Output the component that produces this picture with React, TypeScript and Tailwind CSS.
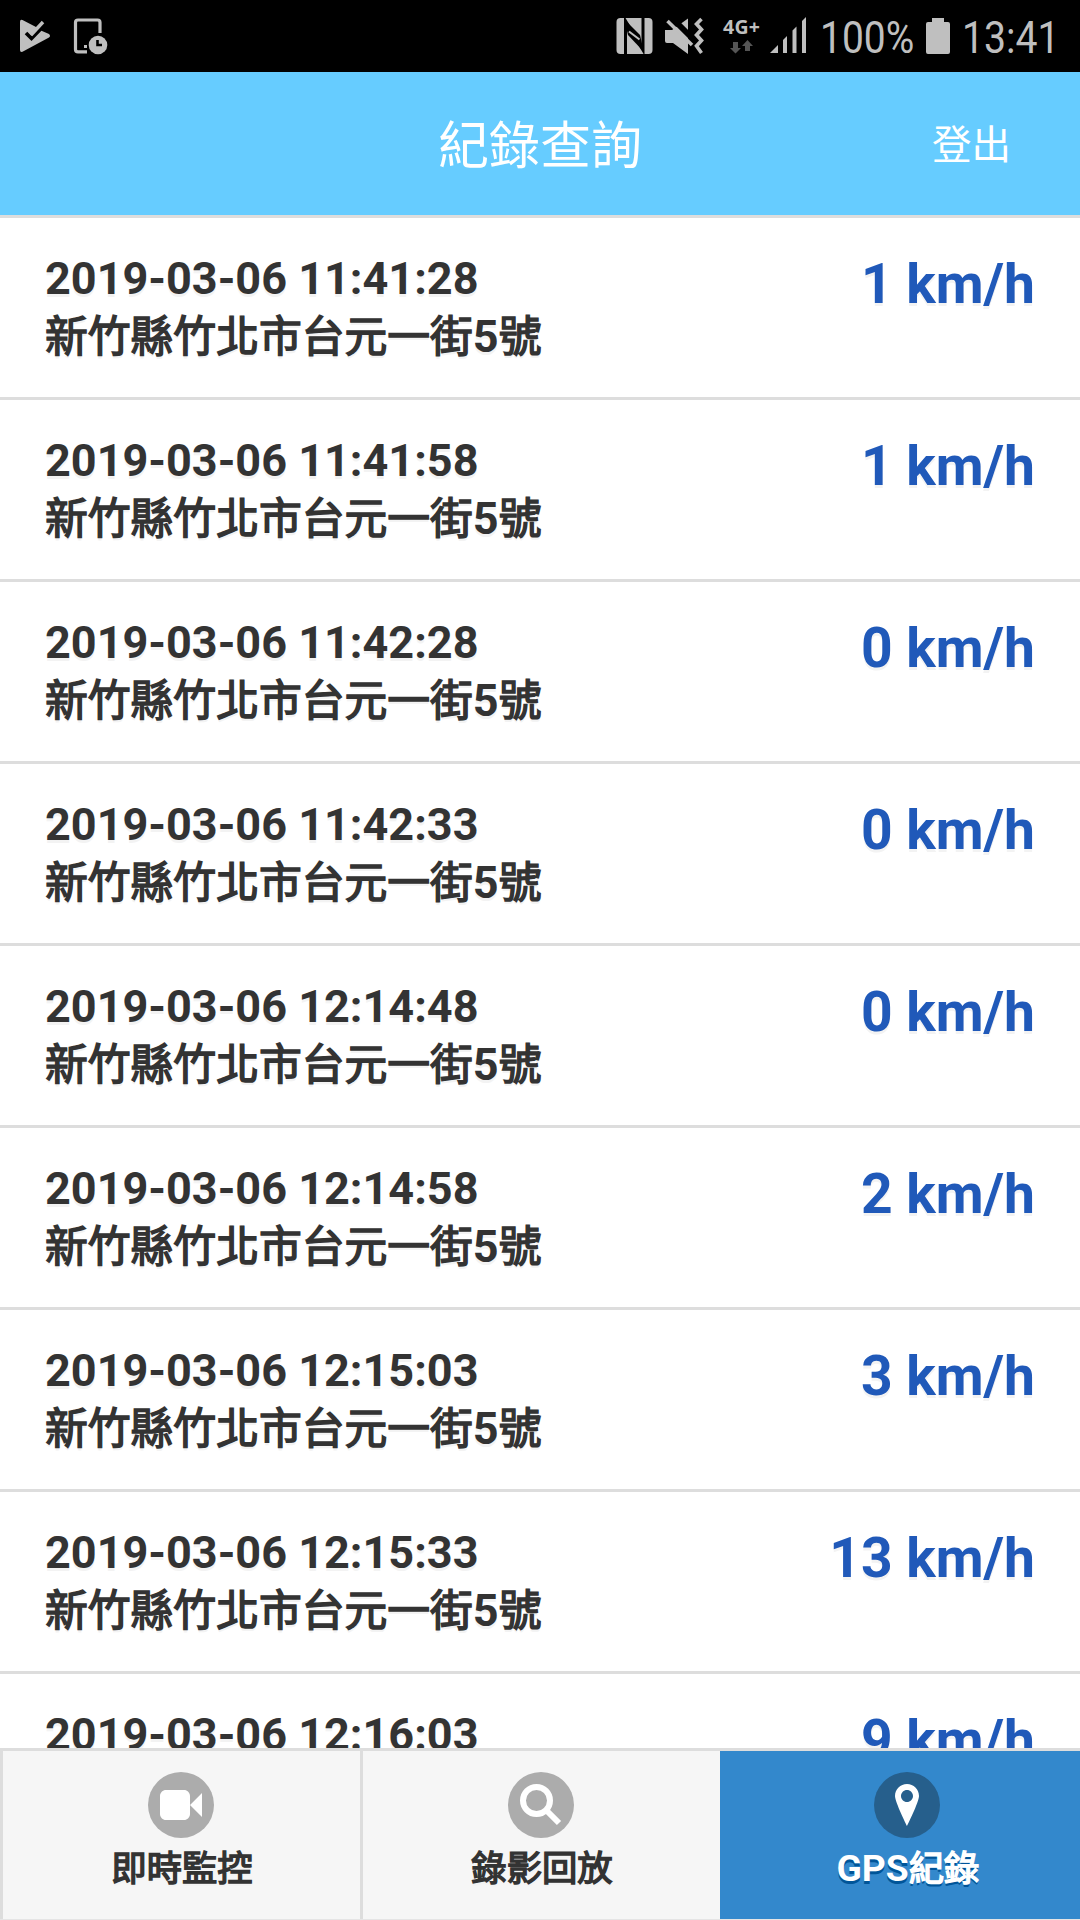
import type { ReactNode } from "react";

interface GpsRecord {
  time: string;
  address: string;
  speed: number;
}

const ADDRESS = "新竹縣竹北市台元一街5號";

const records: GpsRecord[] = [
  { time: "2019-03-06 11:41:28", address: ADDRESS, speed: 1 },
  { time: "2019-03-06 11:41:58", address: ADDRESS, speed: 1 },
  { time: "2019-03-06 11:42:28", address: ADDRESS, speed: 0 },
  { time: "2019-03-06 11:42:33", address: ADDRESS, speed: 0 },
  { time: "2019-03-06 12:14:48", address: ADDRESS, speed: 0 },
  { time: "2019-03-06 12:14:58", address: ADDRESS, speed: 2 },
  { time: "2019-03-06 12:15:03", address: ADDRESS, speed: 3 },
  { time: "2019-03-06 12:15:33", address: ADDRESS, speed: 13 },
  { time: "2019-03-06 12:16:03", address: ADDRESS, speed: 9 },
];

// Latin runs keep the parent's bold, Chinese runs are slightly smaller with a synthetic bold
function MixedText({ text }: { text: string }) {
  return (
    <>
      {text.split(/([A-Za-z0-9]+)/).filter(Boolean).map((part, index) =>
        /^[A-Za-z0-9]/.test(part) ? (
          <span key={index}>{part}</span>
        ) : (
          <span key={index} className="text-[0.951em] font-normal [-webkit-text-stroke:1.5px_currentColor]">
            {part}
          </span>
        )
      )}
    </>
  );
}

function StatusBar() {
  return (
    <div className="flex h-[72px] shrink-0 items-start bg-black text-[#bfbfbf]">
      <svg className="h-[72px] w-[600px] shrink-0" viewBox="0 0 600 72" fill="currentColor">
        <path d="M20 22Q20 19 22.500 20L36 27L42 31L49 34Q51 36 49 37.500L22.500 51.800Q20 52.500 20 50Z" />
        <path d="M26 33L31.500 38.500L44 25.500" fill="none" stroke="#000" strokeWidth="3.600" />
        <path d="M31 35L43 22" fill="none" stroke="currentColor" strokeWidth="3.400" />
        <path d="M87 51.800H78Q75.500 51.800 75.500 49.500V22.500Q75.500 20 78 20H97.500Q100 20 100 22.500V33" fill="none" stroke="currentColor" strokeWidth="3.200" />
        <rect x="84" y="45" width="3" height="3" />
        <circle cx="98" cy="45" r="9.300" />
        <path d="M97.500 40V45H102" fill="none" stroke="#000" strokeWidth="2.600" />
      </svg>
      <svg className="h-[72px] w-[220px] shrink-0" viewBox="600 0 220 72" fill="currentColor">
        <rect x="616.500" y="18" width="36" height="36" rx="4" />
        <path d="M625.500 54V21L643 50V18" fill="none" stroke="#000" strokeWidth="3" />
        <path d="M624 19L640 35L644 52L628 35Z" fill="#000" />
        <path d="M629 31.500L639.500 39.500" stroke="currentColor" strokeWidth="2" />
        <path d="M665 30H672L688 18.500V54L673 43H667Q665 43 665 41Z" />
        <path d="M670 16L696 42" stroke="#000" strokeWidth="6" />
        <path d="M667.500 21L692 45" stroke="currentColor" strokeWidth="3.500" />
        <path d="M701.500 19L696.500 24L701.500 29.500L696.500 35L701.500 40.500L696.500 46L701.500 53" fill="none" stroke="currentColor" strokeWidth="3.600" />
        <text x="723" y="34" fontSize="19.500" fontWeight="700" fontFamily="'Open Sans', sans-serif" textLength="37">4G+</text>
        <path d="M733 42H738V48H741L735.500 53.500L730 48H733ZM745 51V46H742L747.500 40L753 46H750V51Z" fill="#555" />
        <path d="M770 53L778 45V53ZM783 53V40L787 36V53ZM792.500 53V30.500L796.500 26.500V53ZM802 53V21L806 17V53Z" />
      </svg>
      <div className="w-[106px] pt-[10px] text-[45px] leading-[56px]">
        <span className="inline-block origin-left scale-x-[0.865]">100%</span>
      </div>
      <svg className="h-[72px] w-6 shrink-0" viewBox="926 0 24 72" fill="currentColor">
        <path d="M932 18H944V22H948Q950 22 950 24V52Q950 54 948 54H928Q926 54 926 52V24Q926 22 928 22H932Z" />
      </svg>
      <div className="w-[110px] pt-[10px] pl-3 text-[45px] leading-[56px]">
        <span className="inline-block origin-left scale-x-[0.87]">13:41</span>
      </div>
    </div>
  );
}

function Header() {
  return (
    <header className="grid h-[146px] shrink-0 grid-cols-3 items-center border-b-[3px] border-[#ddd] bg-[#66ccff] text-white">
      <div />
      <h1 className="pt-[7px] text-center text-[51px] leading-[60px] whitespace-nowrap">紀錄查詢</h1>
      <button className="justify-self-end pt-[5px] pr-[69px] text-[39.500px] leading-[60px]">登出</button>
    </header>
  );
}

function RecordRow({ record }: { record: GpsRecord }) {
  return (
    <li className="flex h-[182px] shrink-0 justify-between border-b-[3px] border-[#ddd] px-[45px] font-bold">
      <div className="pt-8 text-[45px] leading-[58px] text-[#333] [text-shadow:0_3px_0_#f3f3f3]">
        <p>{record.time}</p>
        <p>
          <MixedText text={record.address} />
        </p>
      </div>
      <p className="pt-[31px] text-[55.200px] leading-[70px] text-[#2059b9] [text-shadow:0_3px_0_#f3f3f3]">
        {record.speed} km/h
      </p>
    </li>
  );
}

interface TabProps {
  label: string;
  active?: boolean;
  children: ReactNode;
}

function Tab({ label, active, children }: TabProps) {
  return (
    <button
      className={
        active
          ? "flex w-[360px] flex-col items-center bg-[#3388cc] pt-[21px] pl-3.5 text-white [text-shadow:0_3px_0_#005599]"
          : "flex w-[360px] flex-col items-center border-l-[3px] border-[#ddd] bg-[#f6f6f6] pt-[21px] pr-px text-[#333] [text-shadow:0_3px_0_#f3f3f3]"
      }
    >
      <span className={active ? "rounded-full bg-[#265f8c] p-3" : "rounded-full bg-[#acacac] p-3"}>
        <svg className="size-[42px]" viewBox="0 0 14 14" fill="#fff">
          {children}
        </svg>
      </span>
      <span className="mt-[7px] pl-0.5 text-[37.200px] leading-[46px] font-bold">
        <MixedText text={label} />
      </span>
    </button>
  );
}

function App() {
  return (
    <div className="flex h-[1920px] w-[1080px] flex-col overflow-hidden bg-white font-['Roboto','Noto_Sans_CJK_TC',sans-serif]">
      <StatusBar />
      <Header />
      <ul className="flex min-h-0 flex-1 flex-col overflow-hidden">
        {records.map((record) => (
          <RecordRow key={record.time} record={record} />
        ))}
      </ul>
      <nav className="flex h-[172px] shrink-0 border-t-[3px] border-b border-t-[#ddd] border-b-[#e5e5e5]">
        <Tab label="即時監控">
          <path d="M8 2H2C.9 2 0 2.900 0 4v6c0 1.100.9 2 2 2h6c1.100 0 2-.9 2-2V4c0-1.100-.9-2-2-2zM14 3l-4 4 4 4z" />
        </Tab>
        <Tab label="錄影回放">
          <circle cx="5.500" cy="5.500" r="4.500" fill="none" stroke="#fff" strokeWidth="2" />
          <path d="M8.500 8.500L13 13" stroke="#fff" strokeWidth="2" />
        </Tab>
        <Tab label="GPS紀錄" active>
          <path d="M7 0C4.800 0 3 1.800 3 4c0 2 4 10 4 10s4-8 4-10c0-2.200-1.800-4-4-4zM7 6C5.900 6 5 5.100 5 4s.9-2 2-2 2 .9 2 2-.9 2-2 2z" />
        </Tab>
      </nav>
    </div>
  );
}

export default App;
